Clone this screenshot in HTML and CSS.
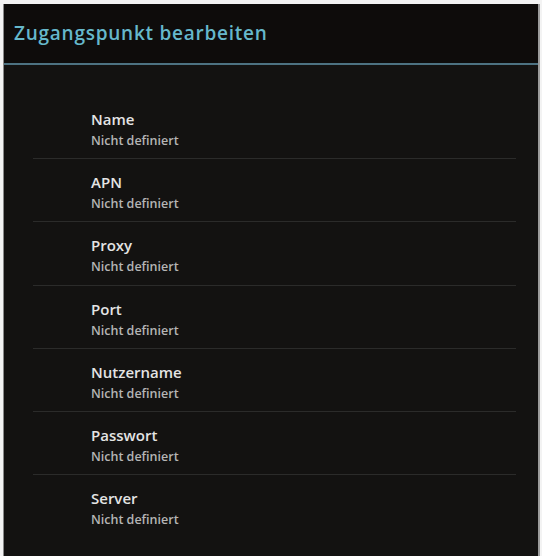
FILE: index.html
```html
<!DOCTYPE html>
<html lang="de">
<head>
<meta charset="utf-8">
<title>Zugangspunkt bearbeiten</title>
<link rel="stylesheet" href="styles.css">
</head>
<body>
<div class="screen">
  <header class="header">
    <h1 class="title">Zugangspunkt bearbeiten</h1>
  </header>
  <ul class="list">
    <li class="row"><div class="row-title">Name</div><div class="row-sub">Nicht definiert</div></li>
    <li class="row"><div class="row-title">APN</div><div class="row-sub">Nicht definiert</div></li>
    <li class="row"><div class="row-title">Proxy</div><div class="row-sub">Nicht definiert</div></li>
    <li class="row"><div class="row-title">Port</div><div class="row-sub">Nicht definiert</div></li>
    <li class="row"><div class="row-title">Nutzername</div><div class="row-sub">Nicht definiert</div></li>
    <li class="row"><div class="row-title">Passwort</div><div class="row-sub">Nicht definiert</div></li>
    <li class="row"><div class="row-title">Server</div><div class="row-sub">Nicht definiert</div></li>
  </ul>
</div>
</body>
</html>
```
FILE: styles.css
```css
html, body {
  margin: 0;
  padding: 0;
  background: #f3f3f3;
  height: 100%;
  overflow: hidden;
}
.screen {
  margin: 4px 2px 0 3px;
  height: 552px;
  background: #131211;
  border-left: 1px solid #8a8a8a;
  border-right: 2px solid #9c9c9c;
  font-family: "Open Sans", "Noto Sans", sans-serif;
  overflow: hidden;
}
.header {
  height: 61px;
  box-sizing: border-box;
  padding: 17px 0 0 10px;
  background: #0e0c0b;
  border-bottom: 2px solid #4d7282;
}
.title {
  margin: 0;
  font-size: 19px;
  line-height: 24px;
  font-weight: 600;
  letter-spacing: 0.75px;
  color: #66b8cb;
}
.list {
  list-style: none;
  margin: 0 22px 0 29px;
  padding: 31px 0 0 0;
}
.row {
  padding: 13px 0 9.2px 58px;
}
.row + .row {
  border-top: 1px solid #2b2b2a;
}
.row-title {
  font-size: 15px;
  line-height: 20px;
  font-weight: 600;
  color: #e4e4e4;
}
.row-sub {
  margin-top: 4px;
  font-size: 12.5px;
  line-height: 16px;
  font-weight: 600;
  color: #b5b5b5;
}
```
